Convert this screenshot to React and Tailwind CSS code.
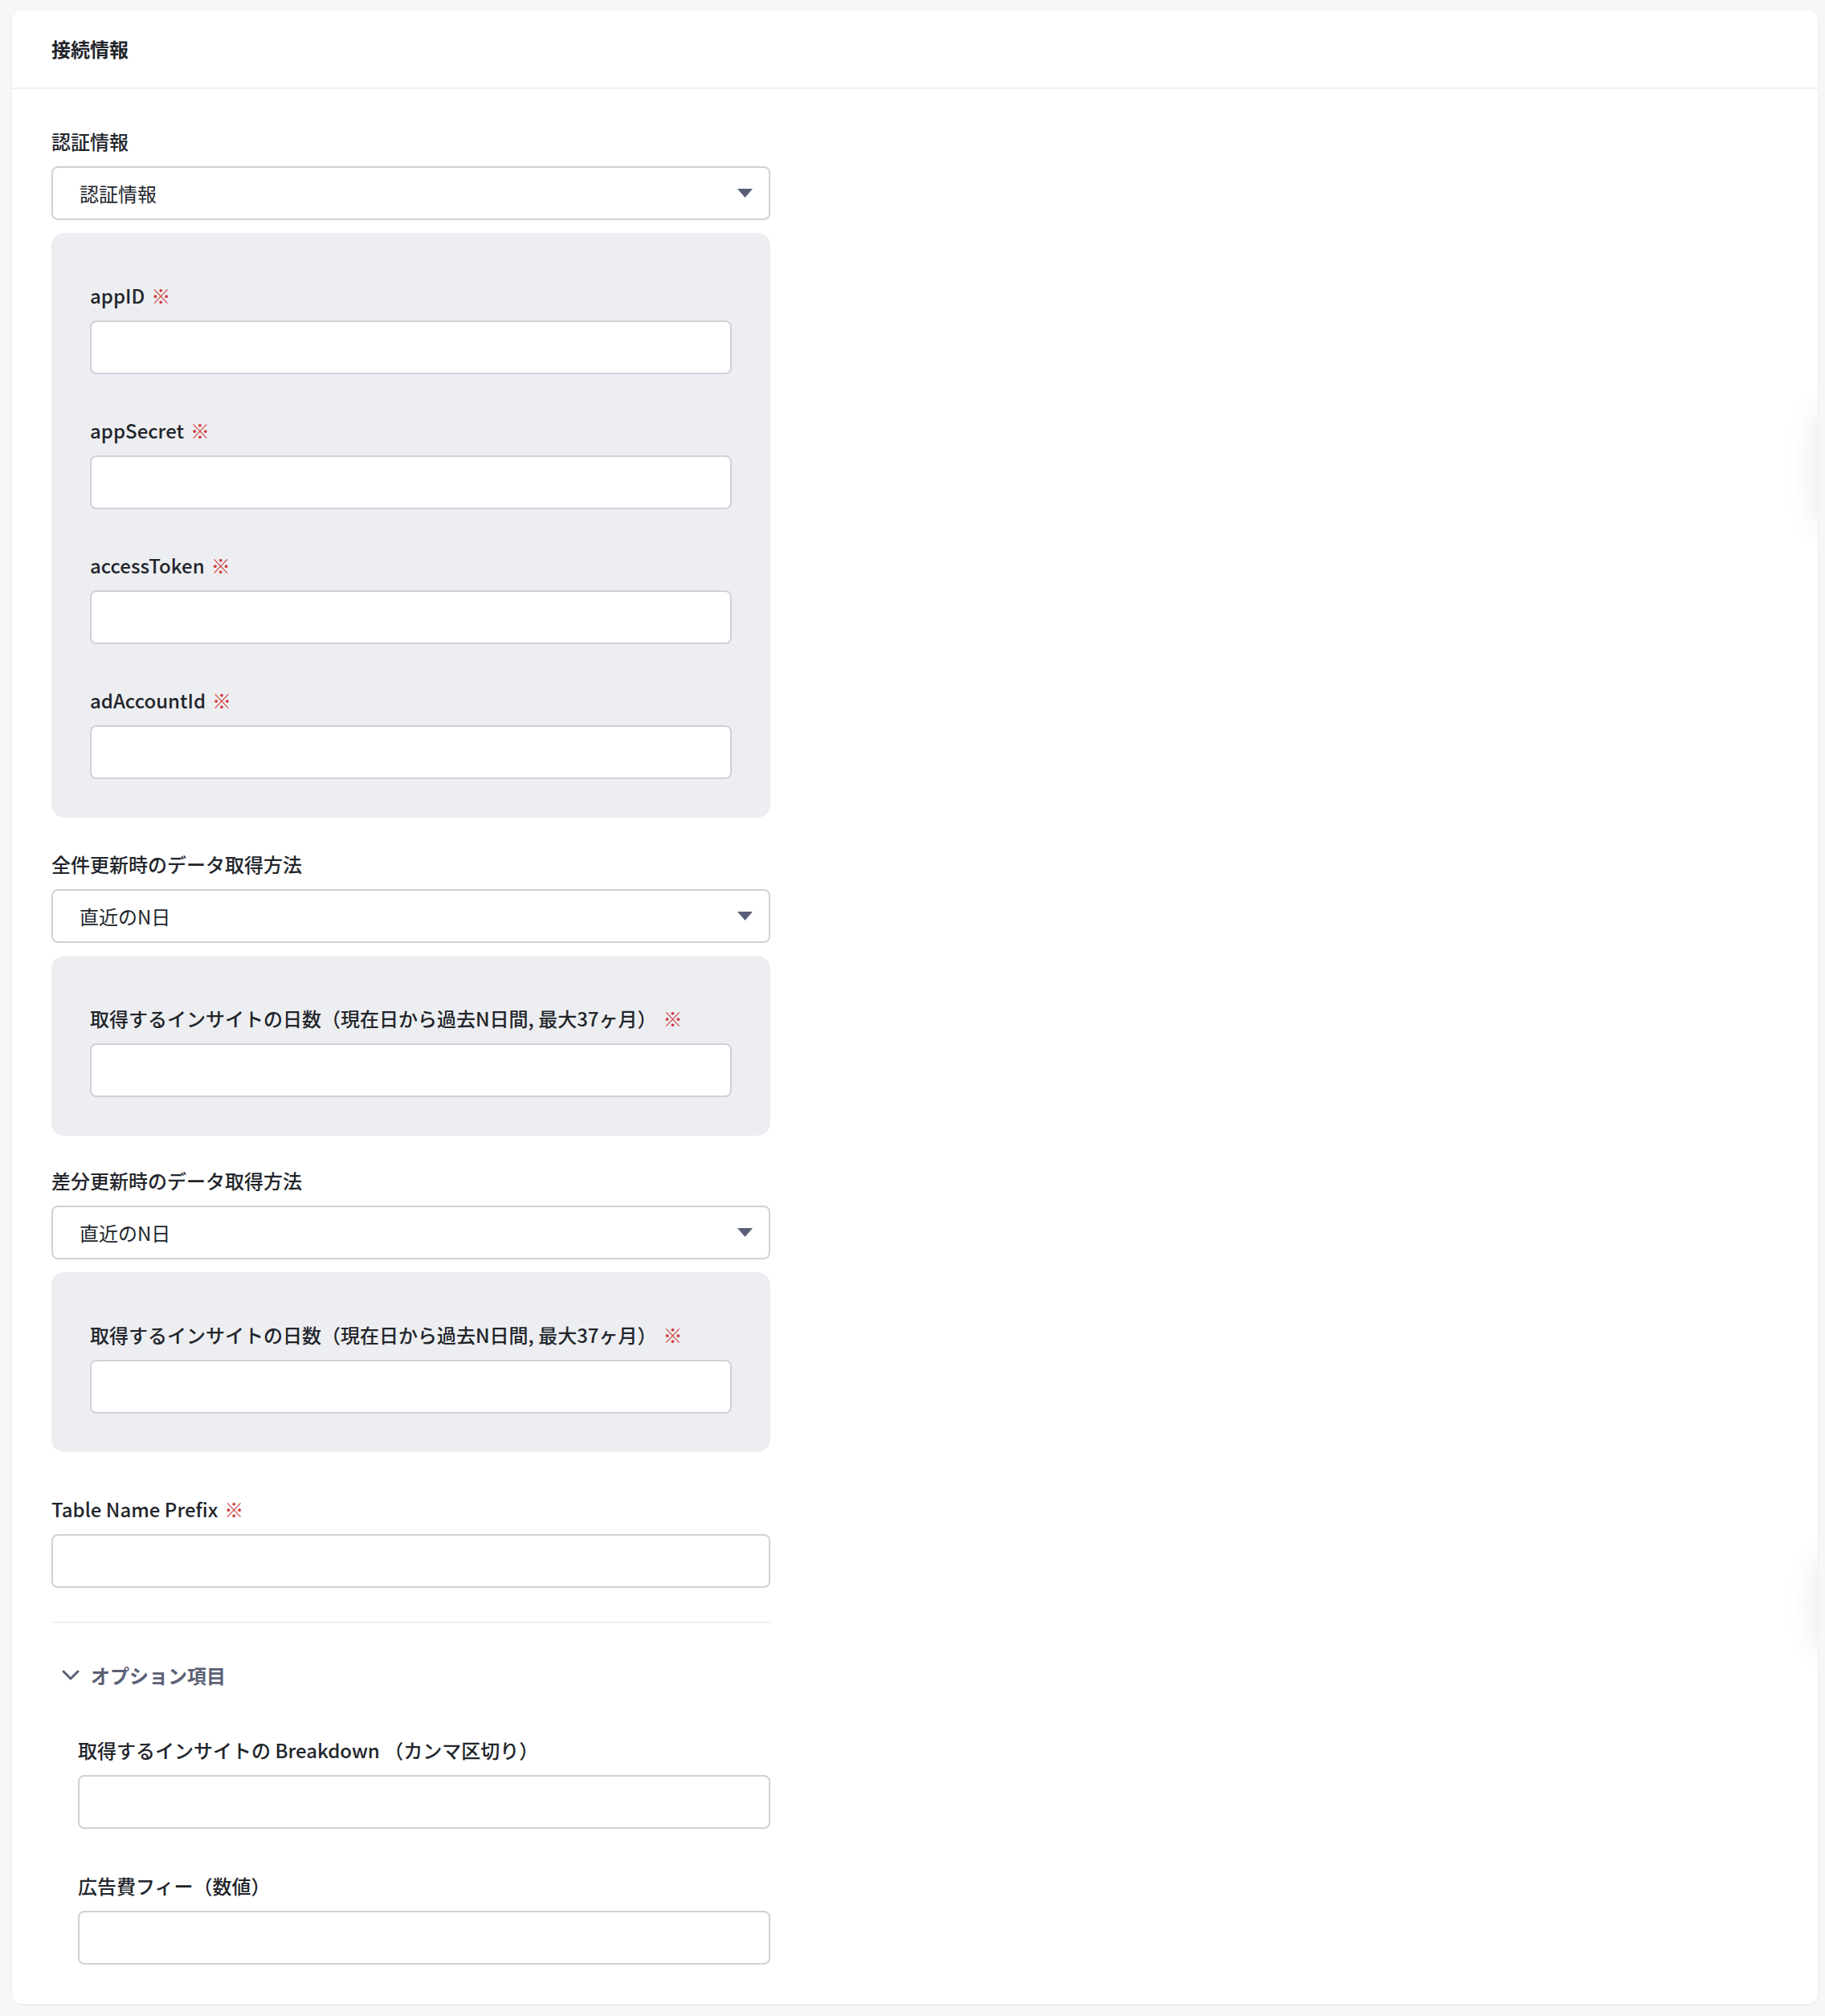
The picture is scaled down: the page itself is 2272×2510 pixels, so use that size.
const FONT = { fontFamily: '"Noto Sans CJK JP", "Noto Sans", sans-serif' };

const Required = () => <span className="ml-2 text-[#cf3a3a]">※</span>;

const FieldLabel = ({ children, required }) => (
  <label className="block text-[24px] leading-[36px] font-medium text-[#22252b]">
    {children}
    {required && <Required />}
  </label>
);

const TextInput = () => (
  <input
    type="text"
    className="mt-[13px] block h-[67px] w-full rounded-lg border-2 border-[#d0d1d9] bg-white px-6 text-[24px] outline-none"
  />
);

const Field = ({ label, required }) => (
  <div>
    <FieldLabel required={required}>{label}</FieldLabel>
    <TextInput />
  </div>
);

const SelectBox = ({ value }) => (
  <div className="mt-[13px] flex h-[67px] w-full items-center justify-between rounded-lg border-2 border-[#d0d1d9] bg-white pl-[33px] pr-[20px]">
    <span className="text-[24px] text-[#22252b]">{value}</span>
    <svg width="19" height="11" viewBox="0 0 19 11">
      <path d="M0 0h19L9.5 11z" fill="#595e78" />
    </svg>
  </div>
);

const SubPanel = ({ children }) => (
  <div className="mt-4 flex flex-col gap-[52px] rounded-2xl bg-[#edeef1] px-12 pt-[60px] pb-12">
    {children}
  </div>
);

const SelectField = ({ label, value }) => (
  <div>
    <FieldLabel>{label}</FieldLabel>
    <SelectBox value={value} />
  </div>
);

export default function App() {
  return (
    <div className="min-h-screen bg-[#f6f7f9] pt-[13px] pb-4 pl-[15px] pr-[9px]" style={FONT}>
      <div className="relative overflow-hidden rounded-xl bg-white shadow-[0_1px_3px_rgba(0,0,0,0.08)]">
        {/* floating tabs just beyond the right edge */}
        <div className="absolute top-[500px] right-[-40px] h-[140px] w-[40px] rounded-lg shadow-[0_0_40px_rgba(0,0,0,0.10)]" />
        <div className="absolute top-[1930px] right-[-40px] h-[110px] w-[40px] rounded-lg shadow-[0_0_40px_rgba(0,0,0,0.10)]" />

        <div className="flex h-[98px] items-center border-b-2 border-[#eef0f2] px-[49px]">
          <h2 className="text-[24px] font-bold text-[#22252b]">接続情報</h2>
        </div>

        <div className="px-[49px] pt-[47px] pb-[49px]">
          <div className="w-[895px]">
            <SelectField label="認証情報" value="認証情報" />
            <SubPanel>
              <Field label="appID" required />
              <Field label="appSecret" required />
              <Field label="accessToken" required />
              <Field label="adAccountId" required />
            </SubPanel>

            <div className="mt-10">
              <SelectField label="全件更新時のデータ取得方法" value="直近のN日" />
              <SubPanel>
                <Field label="取得するインサイトの日数（現在日から過去N日間, 最大37ヶ月）" required />
              </SubPanel>
            </div>

            <div className="mt-[38px]">
              <SelectField label="差分更新時のデータ取得方法" value="直近のN日" />
              <SubPanel>
                <Field label="取得するインサイトの日数（現在日から過去N日間, 最大37ヶ月）" required />
              </SubPanel>
            </div>

            <div className="mt-[53px]">
              <Field label="Table Name Prefix" required />
            </div>

            <div className="mt-[42px] border-t-2 border-[#eef0f2]" />

            <button className="mt-[47px] flex items-center gap-[14px] pl-[13px] text-[24px] leading-[36px] font-bold text-[#5b6076]">
              <svg width="22" height="14" viewBox="0 0 22 14" fill="none">
                <path d="M2 2l9 9 9-9" stroke="#5b6076" strokeWidth="3" strokeLinecap="round" strokeLinejoin="round" />
              </svg>
              オプション項目
            </button>

            <div className="mt-[57px] flex flex-col gap-[53px] pl-[33px]">
              <Field label="取得するインサイトの Breakdown （カンマ区切り）" />
              <Field label="広告費フィー（数値）" />
            </div>
          </div>
        </div>
      </div>
    </div>
  );
}
